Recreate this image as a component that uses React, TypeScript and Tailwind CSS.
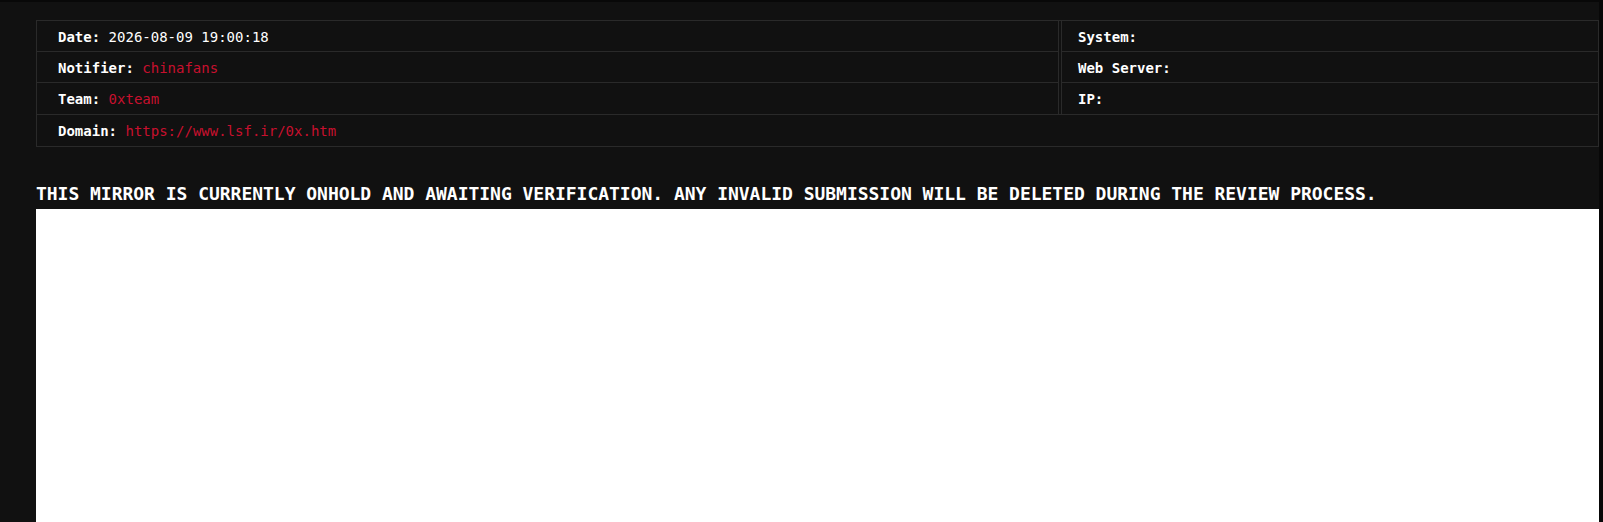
import React from "react";

const mono = { fontFamily: '"DejaVu Sans Mono", "Liberation Mono", monospace' };

function Row({ label, value, red, last }: { label: string; value?: string; red?: boolean; last?: boolean }) {
  return (
    <div className={`h-[31px] leading-[32px] pl-[21px] text-[14px] ${last ? "" : "border-b border-[#2a2a2a]"}`}>
      <span className="font-bold text-white">{label}</span>
      {value ? <span className={red ? "text-[#c8102e]" : "text-white"}> {value}</span> : null}
    </div>
  );
}

export default function App() {
  return (
    <div className="h-[522px] w-full overflow-hidden bg-[#111111] border-t-2 border-[#080808] border-r-4 border-r-[#080808]" style={mono}>
      <div className="pl-[36px]">
        <div className="mt-[18px] border border-[#2a2a2a]">
          <div className="flex border-b border-[#2a2a2a]">
            <div className="w-[1022px] border-r border-[#2a2a2a]">
              <Row label="Date:" value="2026-08-09 19:00:18" />
              <Row label="Notifier:" value="chinafans" red />
              <Row label="Team:" value="0xteam" red last />
            </div>
            <div className="ml-[2px] flex-1 border-l border-[#2a2a2a] [&>div]:pl-[16px]">
              <Row label="System:" />
              <Row label="Web Server:" />
              <Row label="IP:" last />
            </div>
          </div>
          <Row label="Domain:" value="https://www.lsf.ir/0x.htm" red last />
        </div>
        <h2 className="mt-[33px] mb-[2px] text-[18px] leading-[27px] tracking-[-0.025px] font-bold text-white">
          THIS MIRROR IS CURRENTLY ONHOLD AND AWAITING VERIFICATION. ANY INVALID SUBMISSION WILL BE DELETED DURING THE REVIEW PROCESS.
        </h2>
        <div className="h-[400px] bg-white"></div>
      </div>
    </div>
  );
}
